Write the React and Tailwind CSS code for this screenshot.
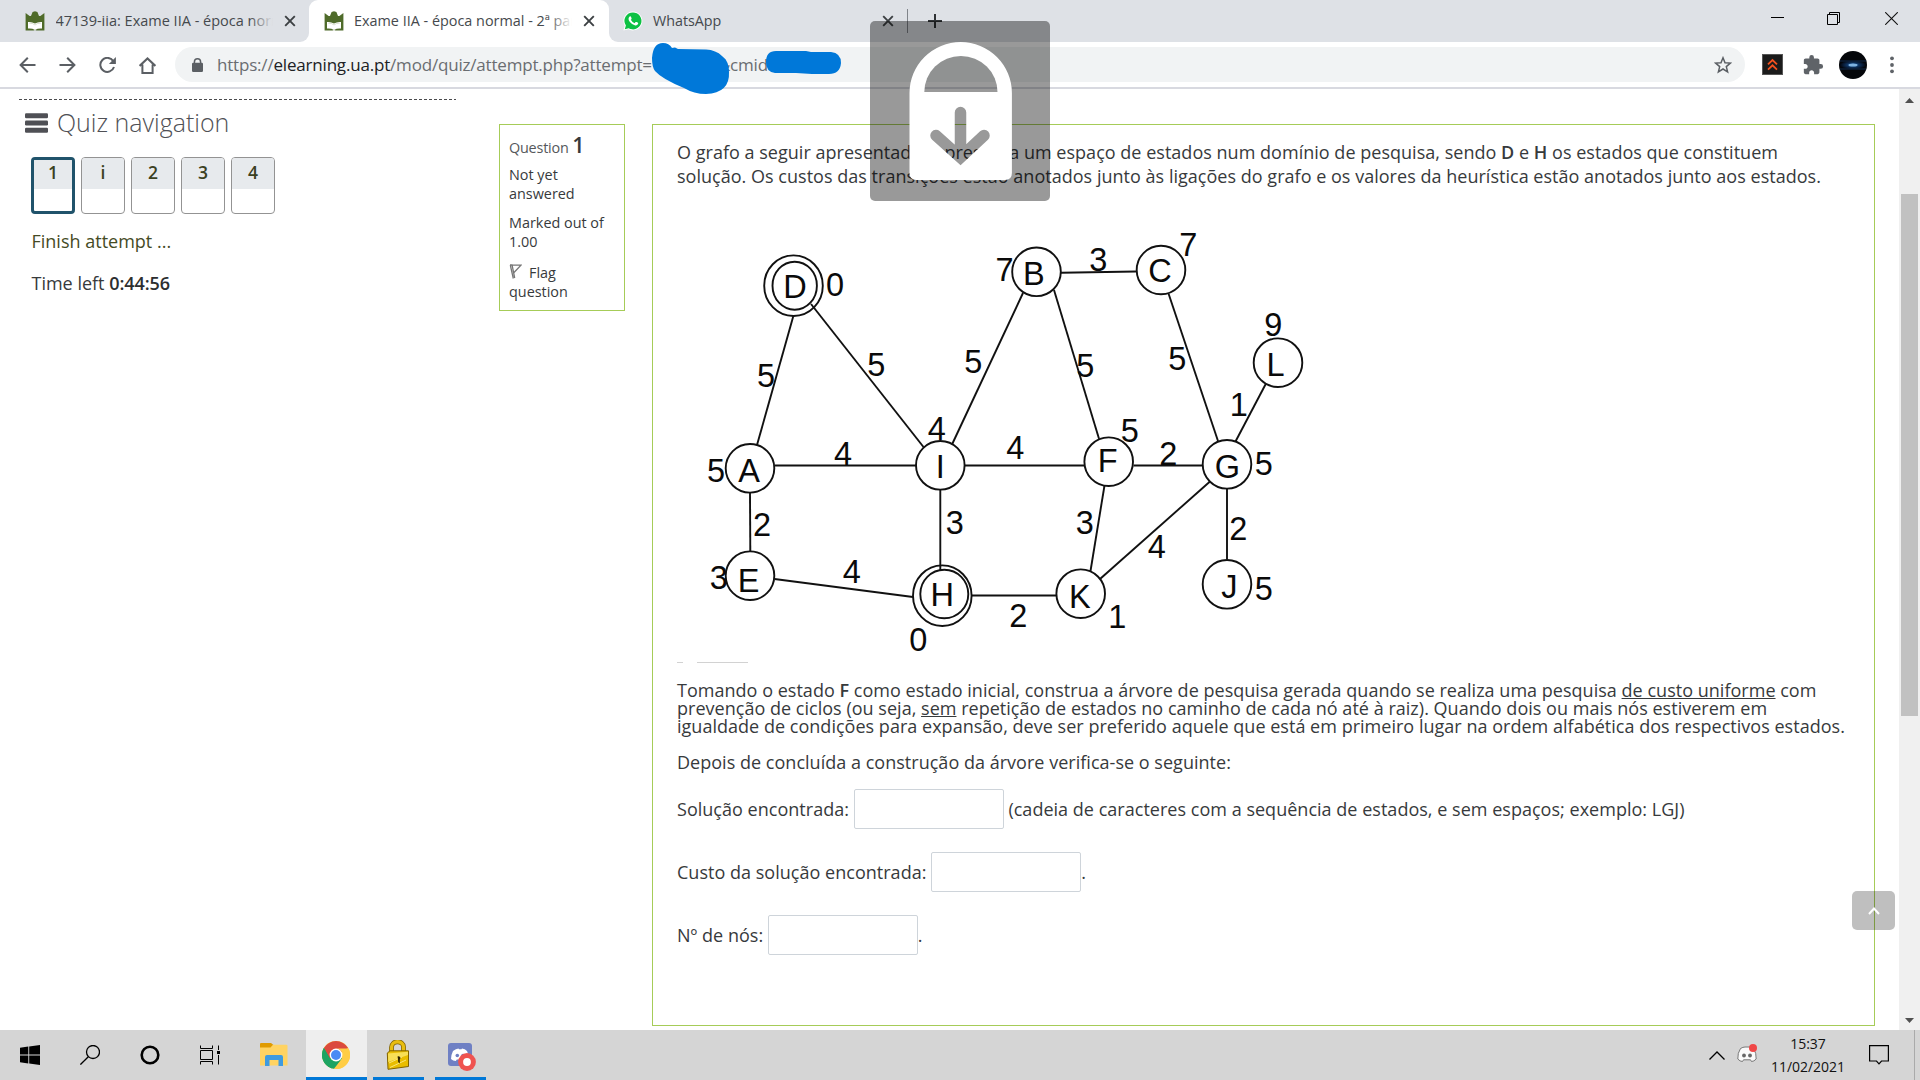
import React from "react";

const Crown = () => (
  <svg width="20" height="20" viewBox="0 0 20 20" className="block shrink-0">
    <path d="M0.6 2 L4.6 5 L6 5 L7.6 1 L10 0.2 L12.4 1 L14 5 L15.4 5 L19.4 2 V19.6 H11.5 L10 18.9 L8.5 19.6 H0.6 Z" fill="#4f6b2a" />
    <path d="M3 11 Q7 10.6 10 12.6 Q13 10.6 17 11 V17.6 Q13 17.2 10 18.9 Q7 17.2 3 17.6 Z" fill="#fff" />
    <path d="M4.2 12.2 Q8 12 10 14 Q12 12 15.8 12.2" stroke="#c9d2bb" strokeWidth="0.7" fill="none" />
  </svg>
);

const Cross = ({ className = "" }) => (
  <svg width="12" height="12" viewBox="0 0 12 12" className={"block shrink-0 " + className}>
    <path d="M1.2 1.2 L10.8 10.8 M10.8 1.2 L1.2 10.8" stroke="#3c4043" strokeWidth="1.9" />
  </svg>
);

function TabStrip() {
  return (
    <div className="flex h-[42px] items-stretch bg-[#dee1e6] text-[14.4px] text-[#45494d]">
      <div className="relative flex w-[309px] items-center pl-[25px]">
        <Crown />
        <div className="relative ml-[10.5px] w-[217px] overflow-hidden whitespace-nowrap text-[14.5px]">
          47139-iia: Exame IIA - época normal
          <div className="absolute inset-y-0 right-0 w-6 bg-gradient-to-r from-[#dee1e600] to-[#dee1e6]" />
        </div>
        <Cross className="ml-[11.5px]" />
        <div className="absolute bottom-0 right-0 h-[9px] w-[9px] bg-white">
          <div className="h-full w-full rounded-br-[9px] bg-[#dee1e6]" />
        </div>
      </div>
      <div className="flex w-[300px] items-center rounded-t-[9px] bg-white pl-[15px]">
        <Crown />
        <div className="relative ml-[10px] w-[218px] overflow-hidden whitespace-nowrap">
          Exame IIA - época normal - 2ª parte
          <div className="absolute inset-y-0 right-0 w-6 bg-gradient-to-r from-[#ffffff00] to-white" />
        </div>
        <Cross className="ml-[11px]" />
      </div>
      <div className="relative flex w-[298px] items-center pl-[14px]">
        <div className="absolute bottom-0 left-0 h-[9px] w-[9px] bg-white">
          <div className="h-full w-full rounded-bl-[9px] bg-[#dee1e6]" />
        </div>
        <svg width="20" height="20" viewBox="0 0 20 20" className="block shrink-0">
          <path d="M10 0.4 A9.5 9.5 0 1 1 5.4 18.3 L0.4 19.6 L1.8 14.7 A9.5 9.5 0 0 1 10 0.4 Z" fill="#fff" />
          <path d="M10 1.4 A8.5 8.5 0 1 1 5.6 17.2 L1.8 18.2 L2.9 14.6 A8.5 8.5 0 0 1 10 1.4 Z" fill="#0cc143" />
          <path d="M6.6 5.4 Q7.6 4.8 8 5.8 L8.6 7.4 Q8.7 8 7.8 8.8 Q9.2 11.4 11.6 12.2 L12.6 11.1 Q13 10.8 13.6 11.1 L15 11.8 Q15.4 12.1 15 13 Q14.2 14.6 12.3 14.4 Q9 13.8 6.9 11 Q4.3 7.6 6.6 5.4 Z" fill="#fff" />
        </svg>
        <div className="ml-[10px] w-[222px] text-[14.3px]">WhatsApp</div>
        <Cross className="ml-[7px]" />
      </div>
      <div className="my-[9px] w-px bg-[#80848a]" />
      <svg width="14" height="14" viewBox="0 0 14 14" className="ml-[20px] self-center">
        <path d="M7 0 V14 M0 7 H14" stroke="#2f3235" strokeWidth="2" />
      </svg>
      <div className="ml-auto flex w-[149px] items-center pb-[5px]">
        <div className="mb-[3px] h-px w-[13px] bg-black" />
        <svg width="13" height="13" viewBox="0 0 13 13" className="ml-[43px]" fill="none" stroke="#000">
          <path d="M0.5 2.5 H10.5 V12.5 H0.5 Z M2.5 2.5 V0.5 H12.5 V10.5 H10.5" />
        </svg>
        <svg width="13" height="13" viewBox="0 0 13 13" className="ml-[45px]" stroke="#111" strokeWidth="1.1">
          <path d="M0.2 0.2 L12.8 12.8 M12.8 0.2 L0.2 12.8" />
        </svg>
      </div>
    </div>
  );
}

function Toolbar() {
  return (
    <div className="relative flex h-[47px] items-start border-b-2 border-[#d8d9e0] bg-white pt-[5px]">
      <div className="flex h-[35px] w-[175px] items-center gap-[23px] pl-[19px] pt-px">
        <svg width="17" height="16" viewBox="0 0 17 16" fill="none" stroke="#5b5f64" strokeWidth="2">
          <path d="M16.5 8 H1.8 M8.8 0.8 L1.6 8 L8.8 15.2" />
        </svg>
        <svg width="17" height="16" viewBox="0 0 17 16" fill="none" stroke="#5b5f64" strokeWidth="2">
          <path d="M0.5 8 H15.2 M8.2 0.8 L15.4 8 L8.2 15.2" />
        </svg>
        <svg width="17" height="16" viewBox="0 0 17 16" fill="none" stroke="#5b5f64" strokeWidth="2">
          <path d="M14.3 4.2 A7 7 0 1 0 15 10" />
          <path d="M16.9 0 V7 H9.9 Z" fill="#5b5f64" stroke="none" />
        </svg>
        <svg width="17" height="17" viewBox="0 0 17 17" fill="none" stroke="#5b5f64" strokeWidth="2">
          <path d="M0.6 8.9 L8.5 1.4 L16.4 8.9 M3.4 7.5 V15.9 H13.6 V7.5" />
        </svg>
      </div>
      <div className="flex h-[35px] w-[1570px] items-center rounded-full bg-[#f1f3f4] pl-[17px] text-[17px] tracking-[-0.19px] text-[#6a6d71]">
        <svg width="11" height="14" viewBox="0 0 11 14" className="mr-[14px] shrink-0">
          <path d="M2.4 6 V3.9 A3.1 3.1 0 0 1 8.6 3.9 V6" fill="none" stroke="#5b5f64" strokeWidth="1.5" />
          <rect x="0" y="4.8" width="11" height="9.2" rx="1.2" fill="#5b5f64" />
        </svg>
        <div className="flex whitespace-nowrap">
          <span>https://</span>
          <span className="text-[#202124]">elearning.ua.pt</span>
          <span>/mod/quiz/attempt.php?attempt=</span>
          <span className="ml-[66px]">&amp;cmid</span>
        </div>
        <svg width="18" height="18" viewBox="0 0 18 18" className="ml-auto mr-[13px]" fill="none" stroke="#5b5f64" strokeWidth="1.5">
          <path d="M9 1.8 L11 6.7 L16.4 7.1 L12.3 10.6 L13.6 15.8 L9 13 L4.4 15.8 L5.7 10.6 L1.6 7.1 L7 6.7 Z" />
        </svg>
      </div>
      <div className="flex h-[35px] flex-1 items-center pl-[17px]">
        <svg width="21" height="21" viewBox="0 0 21 21">
          <rect x="0.5" y="0.5" width="20" height="20" fill="#1b1b1b" stroke="#555" />
          <path d="M6 10.3 L10.5 6 L15 10.3 M6 15.6 L10.5 11.3 L15 15.6" fill="none" stroke="#f4511e" strokeWidth="1.8" />
        </svg>
        <svg width="22" height="22" viewBox="0 0 24 24" className="ml-[19px]">
          <path fill="#5f6368" d="M20.5 11H19V7c0-1.1-.9-2-2-2h-4V3.500a2.500 2.500 0 0 0-5 0V5H4c-1.100 0-1.990.9-1.990 2v3.800H3.500c1.490 0 2.700 1.210 2.700 2.700s-1.210 2.700-2.700 2.700H2V20c0 1.100.9 2 2 2h3.800v-1.500c0-1.490 1.210-2.700 2.700-2.700 1.490 0 2.700 1.210 2.700 2.700V22H17c1.100 0 2-.9 2-2v-4h1.500a2.500 2.500 0 0 0 0-5z" />
        </svg>
        <svg width="28" height="28" viewBox="0 0 28 28" className="ml-[15px]">
          <defs>
            <radialGradient id="glow">
              <stop offset="0" stopColor="#2673bd" />
              <stop offset="0.45" stopColor="#0f3463" />
              <stop offset="1" stopColor="#020610" />
            </radialGradient>
          </defs>
          <circle cx="14" cy="14" r="14" fill="#04060a" />
          <ellipse cx="14" cy="14" rx="13" ry="4.500" fill="url(#glow)" />
          <path d="M1 10 H27 M1 18 H27" stroke="#10294a" />
          <ellipse cx="14" cy="14" rx="4.500" ry="1.500" fill="#7fb2e0" />
        </svg>
        <svg width="4" height="18" viewBox="0 0 4 18" className="ml-[23px]" fill="#5f6368">
          <circle cx="2" cy="2.300" r="1.900" /><circle cx="2" cy="9" r="1.900" /><circle cx="2" cy="15.300" r="1.900" />
        </svg>
      </div>
      <svg width="192" height="54" viewBox="651 42 192 54" className="absolute left-[651px] top-0 z-10 block" fill="#0078d9">
        <path d="M652 58 Q653 43 663 43 Q669 43 672 48 L675 47.500 L678 49 L706 49.500 Q716 50 722 56 Q729 61 729 72 Q730 93 706 94 Q694 94 684 88 Q662 79 655 71 Q652 67 652 58 Z" />
        <path d="M766 62 Q766 51 776 51 L806 51 L811 52 L831 52 Q841 53 841 63 Q840 74 829 74 L812 74 L796 73 L775 73 Q766 72 766 62 Z" />
      </svg>
    </div>
  );
}

function QuizNav() {
  return (
    <div className="ml-[19px] w-[437px] shrink-0 pt-[9px] text-[#373a3c]">
      <svg width="437" height="3" className="block">
        <path d="M0 1.500 H437" stroke="#4a4a4d" strokeWidth="1" strokeDasharray="3 2" />
      </svg>
      <div className="mt-[6px] flex h-[30px] items-center pl-[5.500px]">
        <svg width="23" height="20" viewBox="0 0 23 20" fill="#4f5055" className="mt-px">
          <rect width="23" height="5" rx="1.200" y="0.300" /><rect y="7.500" width="23" height="5" rx="1.200" /><rect y="14.800" width="23" height="5" rx="1.200" />
        </svg>
        <h3 className="ml-[9.500px] text-[25px] font-light leading-[30px] text-[#4f5055]">Quiz navigation</h3>
      </div>
      <div className="mt-[20px] flex gap-[6px] pl-[12px] text-center text-[17.5px] font-semibold leading-[24px] text-[#3b411f]">
        <div className="h-[57px] w-[44px] overflow-hidden rounded-[4px] border-[3px] border-[#20536b] bg-white">
          <div className="h-[29px] bg-[#e7eaed]">1</div>
        </div>
        {["i", "2", "3", "4"].map((n) => (
          <div key={n} className="h-[57px] w-[44px] overflow-hidden rounded-[4px] border border-[#939393] bg-white">
            <div className="h-[31px] bg-[#e7eaed] pt-[2px]">{n}</div>
          </div>
        ))}
      </div>
      <div className="pl-[12.500px] text-[18px] leading-[24px]">
        <div className="mt-[15px] text-[#454b25]">Finish attempt ...</div>
        <div className="mt-[18px]">
          Time left <b className="font-semibold tracking-[-0.1px] text-[#2c2e30]">0:44:56</b>
        </div>
      </div>
    </div>
  );
}

function QuestionInfo() {
  return (
    <div className="ml-[43px] mt-[35px] h-[187px] w-[126px] shrink-0 border border-[#a6cc58] pl-[9px] text-[14.4px] leading-[19.200px] text-[#373a3c]">
      <div className="mt-[8px] flex h-[28px] items-baseline">
        <span className="tracking-[-0.2px] text-[#55585b]">Question&nbsp;</span>
        <span className="text-[21.500px] font-semibold leading-[24px]">1</span>
      </div>
      <div className="mt-[4px]">Not yet<br />answered</div>
      <div className="mt-[9.500px]">Marked out of<br />1.00</div>
      <div className="mt-[11.500px]">
        <svg width="13" height="15" viewBox="0 0 12 15" className="mr-[7px] inline-block align-[-1px]" fill="none" stroke="#777" strokeWidth="1.300">
          <path d="M0.800 1 L3.800 14.500 M5.200 14 L2.600 1.200 H11.500 L4.500 8.500 M0.500 1 H3" />
        </svg>
        Flag<br />question
      </div>
    </div>
  );
}

const edges = [
  [793.5, 315.5, 757, 445], [811, 304, 923.5, 447], [1023, 293, 952, 444.5],
  [1061, 272.7, 1136, 271.5], [1054, 290, 1099, 438.7], [1168.5, 293.5, 1218, 441],
  [1266, 383.5, 1235.5, 441.5], [774.5, 465.5, 916, 465.5], [965, 465.5, 1085, 465.5],
  [1133.5, 465.5, 1202, 465.5], [750, 492.5, 750.3, 551], [940.3, 490, 940.3, 571],
  [774.5, 579, 913, 597], [972, 595.5, 1056, 595.5], [1104.5, 485.5, 1090.5, 571],
  [1100, 579, 1210, 481.5], [1227, 489, 1227, 559.5],
];
const nodes = [
  [793.5, 285.7, 29.3, 30.3], [794.7, 285.7, 22.2, 24], [1036.5, 271.8, 24.3, 24.3],
  [1161, 270, 24.3, 24.3], [1278, 362.7, 24.3, 24.3], [750, 468.3, 24.3, 24.3],
  [940.3, 465.3, 24.3, 24.3], [1108.7, 461.7, 24.3, 24.3], [1227, 464.3, 24.3, 24.3],
  [750, 575.7, 24.3, 24.3], [942.3, 595.7, 29.3, 30.3], [944.3, 594, 24, 24.3],
  [1080.7, 593.7, 24.3, 24.3], [1227, 584.3, 24.3, 24.3],
];
const labels = [
  ["D", 795, 297.6], ["0", 835, 296], ["5", 766, 387], ["5", 876.3, 375.6],
  ["5", 973.3, 373], ["4", 936.7, 439.6], ["4", 843, 464.7], ["4", 1015.3, 459],
  ["5", 716, 481.6], ["A", 749, 482.3], ["I", 940.3, 478], ["2", 762, 535.7],
  ["3", 954.7, 534], ["3", 718.7, 589], ["E", 748.6, 591.6], ["4", 851.7, 582.7],
  ["H", 942.3, 605.6], ["2", 1018.3, 626.7], ["0", 918.3, 651], ["7", 1004.6, 281],
  ["B", 1033.8, 285], ["3", 1098.4, 271], ["C", 1160, 282], ["7", 1188.4, 255.7],
  ["9", 1273.3, 335.6], ["L", 1275.5, 375.6], ["5", 1085.3, 377], ["5", 1177.3, 370],
  ["1", 1238.7, 416], ["5", 1129.7, 441.7], ["F", 1107.8, 472], ["2", 1168.4, 465],
  ["G", 1227.4, 477.7], ["5", 1263.7, 475.4], ["3", 1084.7, 534], ["4", 1156.7, 557.7],
  ["2", 1238.4, 540], ["K", 1079.8, 607.5], ["1", 1117.3, 627.5], ["J", 1229.3, 598],
  ["5", 1263.7, 600],
];

const Graph = () => (
  <svg width="720" height="493" viewBox="677 188 720 493" className="block font-['Liberation_Sans',sans-serif]">
    <g stroke="#111" strokeWidth="1.900" fill="none">
      {edges.map((e, i) => <line key={i} x1={e[0]} y1={e[1]} x2={e[2]} y2={e[3]} />)}
      {nodes.map((n, i) => <ellipse key={i} cx={n[0]} cy={n[1]} rx={n[2]} ry={n[3]} />)}
    </g>
    <g fontSize="32.500" fill="#0a0a0a" textAnchor="middle">
      {labels.map((l, i) => <text key={i} x={l[1]} y={l[2]}>{l[0]}</text>)}
    </g>
    <path d="M677 662.500 H683 M697 662.500 H748" stroke="#d2d2d2" />
  </svg>
);

const Field = () => <input className="h-[40px] w-[150px] rounded-[2px] border border-[#ced4da] bg-white" />;

function Question() {
  return (
    <div className="ml-[27px] mt-[35px] h-[902px] w-[1223px] shrink-0 whitespace-nowrap border border-[#a6cc58] pl-[24px] pt-[15px] text-[18px] tracking-[0.022px] text-[#373a3c]">
      <p className="leading-[24px]">
        O grafo a seguir apresentado representa um espaço de estados num domínio de pesquisa, sendo <b className="font-semibold">D</b> e <b className="font-semibold">H</b> os estados que constituem<br />
        solução. Os custos das transições estão anotados junto às ligações do grafo e os valores da heurística estão anotados junto aos estados.
      </p>
      <Graph />
      <p className="leading-[18px]">
        Tomando o estado <b className="font-semibold">F</b> como estado inicial, construa a árvore de pesquisa gerada quando se realiza uma pesquisa <u>de custo uniforme</u> com<br />
        prevenção de ciclos (ou seja, <u>sem</u> repetição de estados no caminho de cada nó até à raiz). Quando dois ou mais nós estiverem em<br />
        igualdade de condições para expansão, deve ser preferido aquele que está em primeiro lugar na ordem alfabética dos respectivos estados.
      </p>
      <p className="mt-[15px] leading-[24px]">Depois de concluída a construção da árvore verifica-se o seguinte:</p>
      <div className="mt-[15px] flex h-[40px] items-center"><span>Solução encontrada:&nbsp;</span><Field /><span>&nbsp;(cadeia de caracteres com a sequência de estados, e sem espaços; exemplo: LGJ)</span></div>
      <div className="mt-[23px] flex h-[40px] items-center"><span>Custo da solução encontrada:&nbsp;</span><Field /><span>.</span></div>
      <div className="mt-[23px] flex h-[40px] items-center"><span>Nº de nós:&nbsp;</span><Field /><span>.</span></div>
    </div>
  );
}

const Scrollbar = () => (
  <div className="ml-auto flex w-[21px] shrink-0 flex-col items-center bg-[#f0f0f0]">
    <svg width="21" height="21" className="block"><path d="M6 14 L10.500 9 L15 14 Z" fill="#505050" /></svg>
    <div className="mt-[84px] h-[522px] w-[17px] bg-[#c1c1c1]" />
    <svg width="21" height="21" className="mt-auto block"><path d="M6 9 L10.500 14 L15 9 Z" fill="#505050" /></svg>
  </div>
);

function Taskbar() {
  return (
    <div className="flex h-[50px] items-stretch bg-[#d5d5d5]">
      <div className="flex w-[306px] items-center pl-[20px]">
        <svg width="20" height="20" viewBox="0 0 20 20" fill="#000">
          <path d="M0 2.800 L8.300 1.500 V9.400 H0 Z M9.200 1.400 L20 0 V9.400 H9.200 Z M0 10.400 H8.300 V18.500 L0 17.200 Z M9.200 10.400 H20 V20 L9.200 18.600 Z" />
        </svg>
        <svg width="20" height="20" viewBox="0 0 20 20" className="ml-[40px]" fill="none" stroke="#000" strokeWidth="1.300">
          <circle cx="13" cy="7" r="6.500" /><path d="M8.300 11.700 L0.400 19.600" />
        </svg>
        <svg width="20" height="20" viewBox="0 0 20 20" className="ml-[40px]" fill="none" stroke="#000" strokeWidth="2.600">
          <circle cx="10" cy="10" r="8.300" />
        </svg>
        <svg width="20" height="20" viewBox="0 0 20 20" className="ml-[40px]" fill="none" stroke="#000">
          <path d="M0.500 0.500 V3.500 H12.500 V0.500 M0.500 5.500 H12.500 V14.500 H0.500 Z M0.500 19.500 V16.500 H12.500 V19.500 M18.500 0.500 V5 M18.500 10 V19.500" />
          <rect x="17" y="6" width="3" height="3" fill="#000" stroke="none" />
        </svg>
        <svg width="28" height="24" viewBox="0 0 28 24" className="ml-[40px]">
          <path d="M0 1 Q0 0 1 0 H11 L13.500 2 V5 H0 Z" fill="#e09b00" />
          <path d="M0 4.500 H10.500 L13 1.800 H26.500 Q27.500 1.800 27.500 3 V22.500 H0 Z" fill="#ffd362" />
          <path d="M5 23 V14 Q5 12 7 12 H21 Q23 12 23 14 V23 H18.500 V17 H9.500 V23 Z" fill="#3f9be0" />
        </svg>
      </div>
      <div className="flex w-[61px] items-center justify-center border-b-[3px] border-[#0078d7] bg-[#eeeeee] pr-[1.500px] pt-[3px]">
        <svg width="28" height="28" viewBox="0 0 28 28">
          <circle cx="14" cy="14" r="14" fill="#ffcd46" />
          <path d="M14 14 L1.880 7 A14 14 0 0 0 12 27.800 L20.060 17.500 Z" fill="#1da462" />
          <path d="M14 14 L26.120 7 A14 14 0 0 0 1.880 7 L7.940 17.500 Z" fill="#db4a3d" />
          <path d="M1.880 7 L7.940 17.500 A7 7 0 0 0 14 21 L10 27.400 A14 14 0 0 1 1.880 7 Z" fill="#1da462" />
          <path d="M14 7.500 H26.400 A14 14 0 0 1 13 28 L20.060 17.500 A7 7 0 0 0 14 7.500 Z" fill="#ffcd46" />
          <circle cx="14" cy="14" r="6.400" fill="#fff" /><circle cx="14" cy="14" r="5" fill="#4a8af4" />
        </svg>
      </div>
      <div className="ml-[6px] flex w-[51px] items-start justify-center border-b-[3px] border-[#0078d7] pr-[2px] pt-[9.500px]">
        <svg width="24" height="30" viewBox="0 0 24 30">
          <path d="M5.500 13 V7.500 C5.500 0 17.500 0 17.500 7 V12" fill="none" stroke="#7b5d00" strokeWidth="4.800" />
          <path d="M5.500 13 V7.500 C5.500 0 17.500 0 17.500 7 V12" fill="none" stroke="#e8bd10" strokeWidth="3.400" />
          <path d="M1.300 13 L4 10.800 H22.500 V26.500 L2 29.300 Z" fill="#e9bd00" stroke="#806300" strokeWidth="1" />
          <path d="M2 13.400 L22 11.800 V15 L2.200 22 Z" fill="#f8df56" />
          <path d="M3 23 L16 17 M4 27.500 L20 20" stroke="#f9e57a" strokeWidth="1" />
          <path d="M11.500 16.500 a2 2 0 0 1 3 1.500 L13.800 19.500 V23.500 L12.200 22 L12 19 Z" fill="#2c2200" />
        </svg>
      </div>
      <div className="ml-[11px] flex w-[51px] items-start border-b-[3px] border-[#0078d7] pl-[13px] pt-[13px]">
        <svg width="28" height="28" viewBox="0 0 28 28">
          <rect width="24" height="23" rx="3" fill="#6f80c4" />
          <path d="M5 8 Q8 5.500 10.500 5.500 L11 6.300 H13.500 L14 5.500 Q17 5.800 19 8 Q21 12 21 16 Q19 18 16.800 18 L15.800 16.500 H8.800 L7.800 18 Q5 18 3 16 Q3 12 5 8 Z" fill="#fff" />
          <circle cx="9.300" cy="12.500" r="1.800" fill="#6f80c4" /><circle cx="15" cy="12.500" r="1.800" fill="#6f80c4" />
          <circle cx="19" cy="19" r="8.900" fill="#ef5350" /><circle cx="19" cy="19" r="3.900" fill="#fff" />
        </svg>
      </div>
      <div className="ml-auto flex w-[211px] items-center">
        <svg width="16" height="9" viewBox="0 0 16 9" fill="none" stroke="#000" strokeWidth="1.300"><path d="M0.500 8.500 L8 1 L15.500 8.500" /></svg>
        <svg width="20" height="19" viewBox="0 0 20 19" className="-mt-[3px] ml-[12px]">
          <path d="M3.500 4.500 Q6 3 8 3 H12 Q14.500 3 16.500 4.500 Q19.500 9 19.200 15 Q17 17.500 14.500 17.500 L13.500 15.800 H6.500 L5.500 17.500 Q3 17.500 0.800 15 Q0.500 9 3.500 4.500 Z" fill="#fafafa" stroke="#777" />
          <circle cx="7" cy="11.500" r="1.900" fill="#666" /><circle cx="13" cy="11.500" r="1.900" fill="#666" />
          <circle cx="16" cy="4" r="4" fill="#f04747" />
        </svg>
        <div className="ml-[4px] flex w-[94px] flex-col items-center text-[14px] leading-[23px] tracking-[-0.050px] text-[#111]">
          <span>15:37</span>
          <span>11/02/2021</span>
        </div>
        <svg width="20" height="20" viewBox="0 0 20 20" className="ml-[14px]" fill="none" stroke="#000" strokeWidth="1.200">
          <path d="M0.600 0.600 H19.400 V16 H12.500 L10 18.800 L7.500 16 H0.600 Z" />
        </svg>
        <div className="ml-[25px] h-full w-px bg-[#aaaaaa]" />
      </div>
    </div>
  );
}

const VolumeLock = () => (
  <svg width="180" height="180" viewBox="0 0 180 180" className="absolute left-[870px] top-[21px] z-20">
    <mask id="lockShape">
      <path d="M39.500 90 V72 A51.200 51 0 0 1 141.900 72 V152 Q141.900 159 135 159 H46.500 Q39.500 159 39.500 152 Z" fill="#fff" />
      <path d="M54.300 71 A36.600 36 0 0 1 127.500 71 Z" fill="#000" />
      <path d="M90.500 91.500 V136 M66 114.500 L90.500 136.500 L114 114.500" fill="none" stroke="#000" strokeWidth="11.500" strokeLinecap="round" />
    </mask>
    <rect width="180" height="180" rx="5" fill="#000" fillOpacity="0.400" />
    <rect width="180" height="180" fill="#fff" mask="url(#lockShape)" />
  </svg>
);

export default function App() {
  return (
    <div className="relative flex h-[1080px] w-[1920px] flex-col overflow-hidden bg-white font-['Open_Sans','Noto_Sans',sans-serif]">
      <TabStrip />
      <Toolbar />
      <div className="flex h-[941px]">
        <QuizNav />
        <QuestionInfo />
        <Question />
        <Scrollbar />
      </div>
      <Taskbar />
      <VolumeLock />
      <div className="absolute left-[1852px] top-[891px] flex h-[39px] w-[43px] items-center justify-center rounded-[5px] bg-black/25">
        <svg width="12" height="8" viewBox="0 0 12 8" fill="none" stroke="#fff" strokeWidth="2"><path d="M1 7 L6 1.500 L11 7" /></svg>
      </div>
    </div>
  );
}
